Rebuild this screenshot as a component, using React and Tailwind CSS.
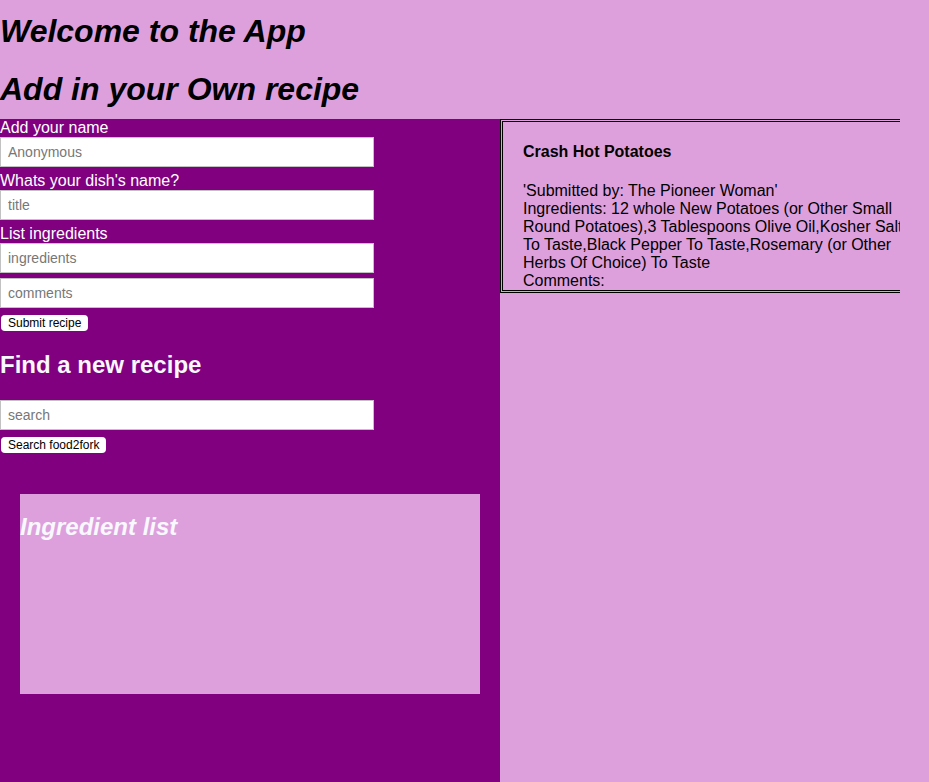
import { useState } from "react";

// --- Recipe App ---
const Field = ({ label, placeholder, value, onChange }) => (
  <>
    {label && <label className="block text-[16px] leading-[18px] text-white">{label}</label>}
    <input
      value={value}
      onChange={(e) => onChange(e.target.value)}
      placeholder={placeholder}
      className="block w-[374px] h-[30px] bg-white border border-[#c2c2c2] px-[7px] text-[14px] text-black placeholder:text-[#777] outline-none"
    />
  </>
);

const Btn = ({ children }) => (
  <button className="block h-[16px] px-[7px] ml-[1px] bg-white rounded-[4px] text-black text-[12px] leading-[16px] whitespace-nowrap">
    {children}
  </button>
);

const App = () => {
  const [form, setForm] = useState({ name: "", title: "", ingredients: "", comments: "" });
  const [search, setSearch] = useState("");
  const set = (k) => (v) => setForm((p) => ({ ...p, [k]: v }));

  return (
    <div className="min-h-screen bg-[#dda0dd] flex flex-col font-['Liberation_Sans',Arial,sans-serif]">
      {/* Titoli */}
      <h1 className="mt-[13px] text-[32px] leading-[37px] font-bold italic text-black">Welcome to the App</h1>
      <h1 className="mt-[21px] mb-[11px] text-[32px] leading-[37px] font-bold italic text-black">Add in your Own recipe</h1>

      <div className="flex flex-1">
        {/* Colonna form */}
        <div className="w-[500px] shrink-0 bg-[#800080] pb-10">
          <Field label="Add your name" placeholder="Anonymous" value={form.name} onChange={set("name")} />
          <div className="h-[5px]" />
          <Field label="Whats your dish's name?" placeholder="title" value={form.title} onChange={set("title")} />
          <div className="h-[5px]" />
          <Field label="List ingredients" placeholder="ingredients" value={form.ingredients} onChange={set("ingredients")} />
          <div className="h-[5px]" />
          <Field placeholder="comments" value={form.comments} onChange={set("comments")} />
          <div className="h-[7px]" />
          <Btn>Submit recipe</Btn>

          <h2 className="mt-[20px] mb-[21px] text-[24px] leading-[28px] font-bold text-[#f8f8ff]">Find a new recipe</h2>
          <Field placeholder="search" value={search} onChange={setSearch} />
          <div className="h-[7px]" />
          <Btn>Search food2fork</Btn>

          {/* Lista ingredienti */}
          <div className="mt-[41px] mx-[20px] h-[200px] bg-[#dda0dd] pt-[19px]">
            <h2 className="text-[24px] leading-[28px] font-bold italic text-[#f8f8ff]">Ingredient list</h2>
          </div>
        </div>

        {/* Ricetta */}
        <div className="w-[400px] overflow-hidden self-start">
          <div className="w-[436px] border-[3px] border-double border-black px-[20px] text-black text-[16px] leading-[18px]">
            <h4 className="mt-[21px] mb-[21px] font-bold">Crash Hot Potatoes</h4>
            <div>'Submitted by: The Pioneer Woman'</div>
            <div className="w-[390px]">
              Ingredients: 12 whole New Potatoes (or Other Small Round Potatoes),3 Tablespoons Olive Oil,Kosher Salt To Taste,Black Pepper To Taste,Rosemary (or Other Herbs Of Choice) To Taste
            </div>
            <div>Comments:</div>
          </div>
        </div>
      </div>
    </div>
  );
};

export default App;
